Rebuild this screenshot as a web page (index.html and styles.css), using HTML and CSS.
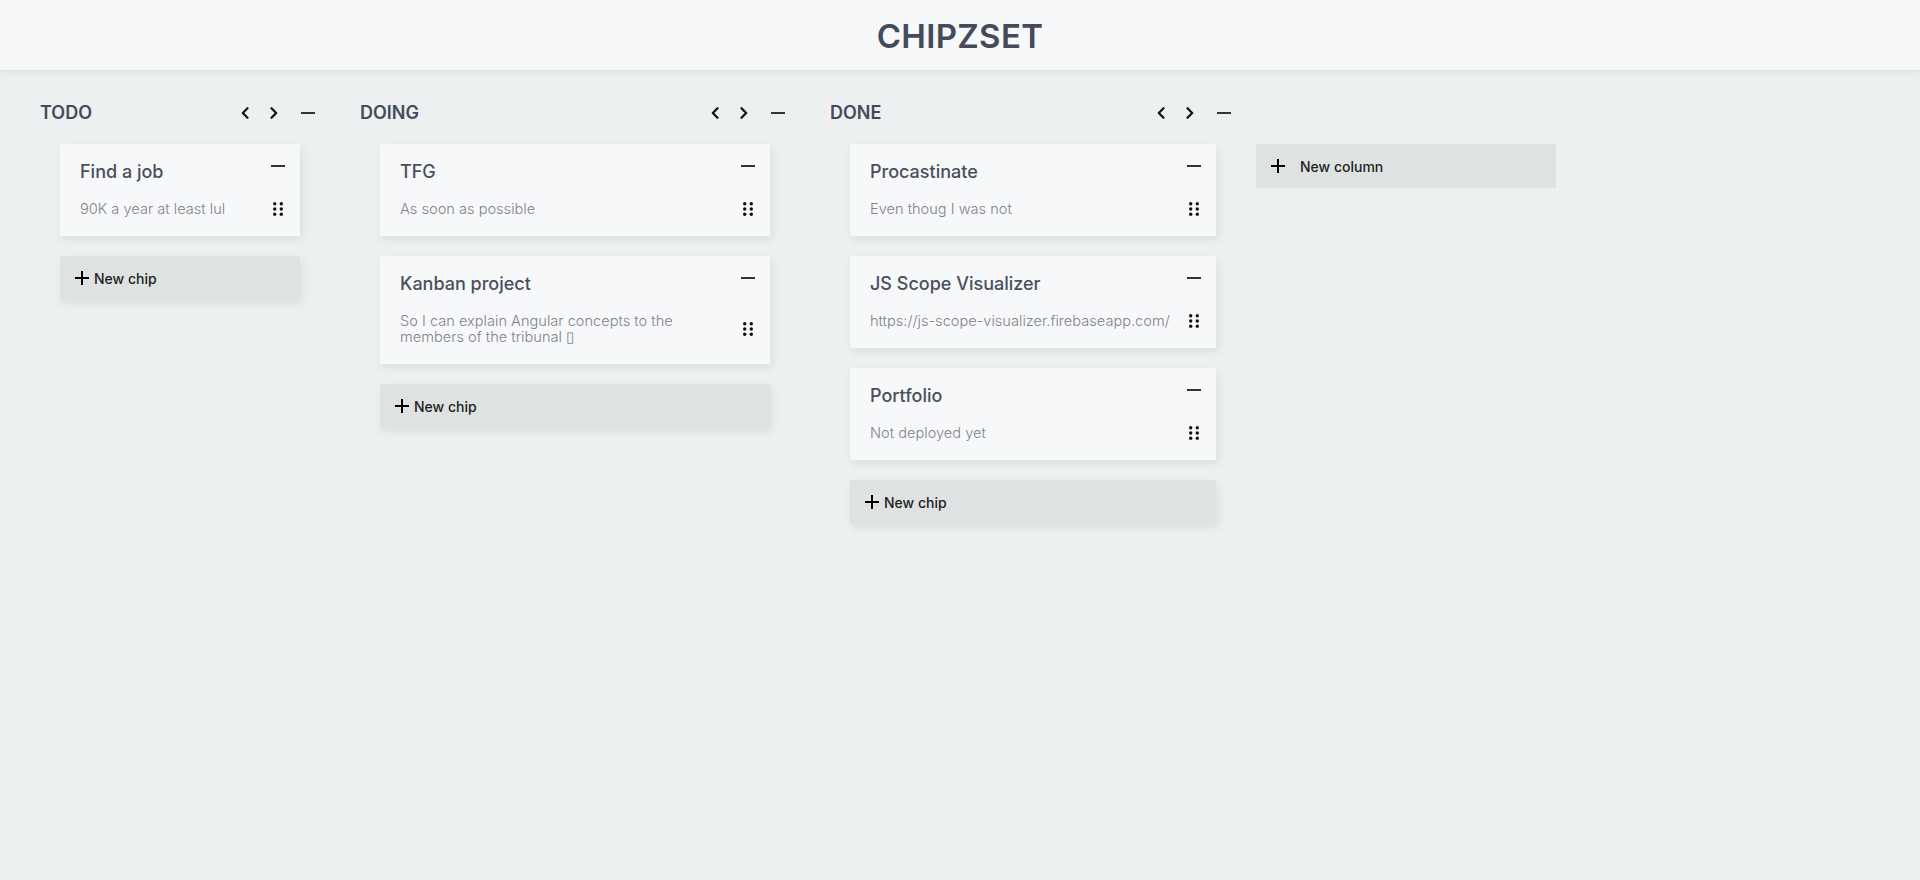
FILE: index.html
```html
<!DOCTYPE html>
<html lang="en">
<head>
<meta charset="utf-8">
<title>Chipzset</title>
<link rel="stylesheet" href="styles.css">
</head>
<body>
<header class="topbar"><h1 class="brand">CHIPZSET</h1></header>
<main class="board">

  <section class="column">
    <div class="col-head">
      <h2 class="col-title">TODO</h2>
      <div class="col-ctrls">
        <svg class="chev" viewBox="0 0 8 12"><path d="M6.5 1.2L1.8 6l4.7 4.8"/></svg>
        <svg class="chev" viewBox="0 0 8 12"><path d="M1.5 1.2L6.2 6l-4.7 4.8"/></svg>
        <svg class="col-min" viewBox="0 0 14 4"><path d="M0 2h14"/></svg>
      </div>
    </div>
    <div class="col-body w-todo">
      <article class="chip">
        <div class="chip-top"><h3 class="chip-title">Find a job</h3><svg class="chip-min" viewBox="0 0 14 8"><path d="M0 5h14"/></svg></div>
        <div class="chip-bottom"><p class="chip-desc">90K a year at least lul</p><svg class="drag" viewBox="0 0 10 14"><circle cx="1.7" cy="1.7" r="1.7"/><circle cx="8.3" cy="1.7" r="1.7"/><circle cx="1.7" cy="7" r="1.7"/><circle cx="8.3" cy="7" r="1.7"/><circle cx="1.7" cy="12.3" r="1.7"/><circle cx="8.3" cy="12.3" r="1.7"/></svg></div>
      </article>
      <button class="new-chip"><svg class="plus" viewBox="0 0 14 14"><path d="M7 0v14M0 7h14"/></svg><span>New chip</span></button>
    </div>
  </section>

  <section class="column">
    <div class="col-head">
      <h2 class="col-title">DOING</h2>
      <div class="col-ctrls">
        <svg class="chev" viewBox="0 0 8 12"><path d="M6.5 1.2L1.8 6l4.7 4.8"/></svg>
        <svg class="chev" viewBox="0 0 8 12"><path d="M1.5 1.2L6.2 6l-4.7 4.8"/></svg>
        <svg class="col-min" viewBox="0 0 14 4"><path d="M0 2h14"/></svg>
      </div>
    </div>
    <div class="col-body w-doing">
      <article class="chip">
        <div class="chip-top"><h3 class="chip-title">TFG</h3><svg class="chip-min" viewBox="0 0 14 8"><path d="M0 5h14"/></svg></div>
        <div class="chip-bottom"><p class="chip-desc">As soon as possible</p><svg class="drag" viewBox="0 0 10 14"><circle cx="1.7" cy="1.7" r="1.7"/><circle cx="8.3" cy="1.7" r="1.7"/><circle cx="1.7" cy="7" r="1.7"/><circle cx="8.3" cy="7" r="1.7"/><circle cx="1.7" cy="12.3" r="1.7"/><circle cx="8.3" cy="12.3" r="1.7"/></svg></div>
      </article>
      <article class="chip">
        <div class="chip-top"><h3 class="chip-title">Kanban project</h3><svg class="chip-min" viewBox="0 0 14 8"><path d="M0 5h14"/></svg></div>
        <div class="chip-bottom"><p class="chip-desc narrow">So I can explain Angular concepts to the members of the tribunal ▯</p><svg class="drag" viewBox="0 0 10 14"><circle cx="1.7" cy="1.7" r="1.7"/><circle cx="8.3" cy="1.7" r="1.7"/><circle cx="1.7" cy="7" r="1.7"/><circle cx="8.3" cy="7" r="1.7"/><circle cx="1.7" cy="12.3" r="1.7"/><circle cx="8.3" cy="12.3" r="1.7"/></svg></div>
      </article>
      <button class="new-chip"><svg class="plus" viewBox="0 0 14 14"><path d="M7 0v14M0 7h14"/></svg><span>New chip</span></button>
    </div>
  </section>

  <section class="column">
    <div class="col-head">
      <h2 class="col-title">DONE</h2>
      <div class="col-ctrls">
        <svg class="chev" viewBox="0 0 8 12"><path d="M6.5 1.2L1.8 6l4.7 4.8"/></svg>
        <svg class="chev" viewBox="0 0 8 12"><path d="M1.5 1.2L6.2 6l-4.7 4.8"/></svg>
        <svg class="col-min" viewBox="0 0 14 4"><path d="M0 2h14"/></svg>
      </div>
    </div>
    <div class="col-body w-done">
      <article class="chip">
        <div class="chip-top"><h3 class="chip-title">Procastinate</h3><svg class="chip-min" viewBox="0 0 14 8"><path d="M0 5h14"/></svg></div>
        <div class="chip-bottom"><p class="chip-desc">Even thoug I was not</p><svg class="drag" viewBox="0 0 10 14"><circle cx="1.7" cy="1.7" r="1.7"/><circle cx="8.3" cy="1.7" r="1.7"/><circle cx="1.7" cy="7" r="1.7"/><circle cx="8.3" cy="7" r="1.7"/><circle cx="1.7" cy="12.3" r="1.7"/><circle cx="8.3" cy="12.3" r="1.7"/></svg></div>
      </article>
      <article class="chip">
        <div class="chip-top"><h3 class="chip-title">JS Scope Visualizer</h3><svg class="chip-min" viewBox="0 0 14 8"><path d="M0 5h14"/></svg></div>
        <div class="chip-bottom"><p class="chip-desc">https://js-scope-visualizer.firebaseapp.com/</p><svg class="drag" viewBox="0 0 10 14"><circle cx="1.7" cy="1.7" r="1.7"/><circle cx="8.3" cy="1.7" r="1.7"/><circle cx="1.7" cy="7" r="1.7"/><circle cx="8.3" cy="7" r="1.7"/><circle cx="1.7" cy="12.3" r="1.7"/><circle cx="8.3" cy="12.3" r="1.7"/></svg></div>
      </article>
      <article class="chip">
        <div class="chip-top"><h3 class="chip-title">Portfolio</h3><svg class="chip-min" viewBox="0 0 14 8"><path d="M0 5h14"/></svg></div>
        <div class="chip-bottom"><p class="chip-desc">Not deployed yet</p><svg class="drag" viewBox="0 0 10 14"><circle cx="1.7" cy="1.7" r="1.7"/><circle cx="8.3" cy="1.7" r="1.7"/><circle cx="1.7" cy="7" r="1.7"/><circle cx="8.3" cy="7" r="1.7"/><circle cx="1.7" cy="12.3" r="1.7"/><circle cx="8.3" cy="12.3" r="1.7"/></svg></div>
      </article>
      <button class="new-chip"><svg class="plus" viewBox="0 0 14 14"><path d="M7 0v14M0 7h14"/></svg><span>New chip</span></button>
    </div>
  </section>

  <div class="new-col-wrap">
    <button class="new-column"><svg class="plus" viewBox="0 0 14 14"><path d="M7 0v14M0 7h14"/></svg><span>New column</span></button>
  </div>

</main>
</body>
</html>
```
FILE: styles.css
```css
* { box-sizing: border-box; }
html, body { margin: 0; padding: 0; }
body {
  background: #ecf0f1;
  font-family: "Inter", "Open Sans", sans-serif;
  min-height: 880px;
}
.topbar {
  height: 70px;
  background: #f7f8fa;
  box-shadow: 0 2px 6px rgba(0, 0, 0, 0.07);
  display: flex;
  align-items: center;
  justify-content: center;
  position: relative;
}
.brand {
  margin: 0;
  font-size: 33px;
  font-weight: 600;
  color: #454a5b;
  letter-spacing: 0.3px;
  line-height: 1;
  padding-top: 2px;
}
.board {
  display: flex;
  align-items: flex-start;
  gap: 45px;
  padding: 31px 0 0 40px;
}
.column { display: flex; flex-direction: column; }
.col-head {
  display: flex;
  align-items: center;
  justify-content: space-between;
  height: 24px;
}
.col-title {
  margin: 0;
  font-size: 18px;
  font-weight: 600;
  color: #454a5b;
  line-height: 24px;
}
.col-ctrls { display: flex; align-items: center; gap: 21px; margin-top: -1px; }
.chev {
  width: 8px; height: 12px;
  fill: none; stroke: #111; stroke-width: 2.2;
  stroke-linecap: round; stroke-linejoin: round;
}
.col-min { width: 14px; height: 4px; margin-left: 2px; stroke: #333; stroke-width: 2; }
.col-body {
  display: flex;
  flex-direction: column;
  gap: 20px;
  margin-top: 19px;
  padding: 0 15px 0 20px;
}
.w-todo { width: 275px; }
.w-doing { width: 425px; }
.w-done { width: 401px; }
.chip {
  background: #f7f8fa;
  padding: 17px 15px 19px 20px;
  box-shadow: 2px 4px 9px rgba(0, 0, 0, 0.07);
}
.chip-top {
  display: flex;
  align-items: flex-start;
  justify-content: space-between;
  height: 22px;
}
.chip-title {
  margin: 0;
  font-size: 18px;
  line-height: 22px;
  font-weight: 500;
  color: #4a4f5c;
}
.chip-min { width: 14px; height: 8px; stroke: #333; stroke-width: 2; }
.chip-bottom {
  display: flex;
  align-items: center;
  justify-content: space-between;
  margin-top: 18px;
}
.chip-desc {
  margin: 0;
  font-size: 14.6px;
  line-height: 16px;
  font-weight: 300;
  color: #80848c;
  white-space: nowrap;
}
.chip-desc.narrow { white-space: normal; width: 292px; }
.drag { width: 10px; height: 14px; fill: #111; margin-right: 2px; flex: none; }
.new-chip, .new-column {
  display: flex;
  align-items: center;
  height: 44px;
  border: 0;
  background: #dfe2e3;
  box-shadow: 2px 4px 9px rgba(0, 0, 0, 0.07);
  font-family: inherit;
  font-size: 14px;
  font-weight: 500;
  color: #222;
  padding: 0 0 0 15px;
  cursor: pointer;
  text-align: left;
}
.new-chip { gap: 5px; }
.plus { width: 14px; height: 14px; stroke: #000; stroke-width: 2; flex: none; }
.new-col-wrap { margin-top: 43px; margin-left: -20px; }
.new-column { width: 300px; gap: 15px; box-shadow: none; font-size: 14px; }
```
